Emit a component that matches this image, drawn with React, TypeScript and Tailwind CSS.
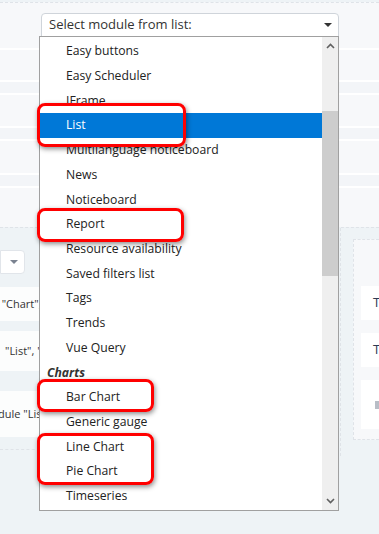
import React from "react";

const items: { label: string; group?: boolean; selected?: boolean }[] = [
  { label: "Easy buttons" },
  { label: "Easy Scheduler" },
  { label: "IFrame" },
  { label: "List", selected: true },
  { label: "Multilanguage noticeboard" },
  { label: "News" },
  { label: "Noticeboard" },
  { label: "Report" },
  { label: "Resource availability" },
  { label: "Saved filters list" },
  { label: "Tags" },
  { label: "Trends" },
  { label: "Vue Query" },
  { label: "Charts", group: true },
  { label: "Bar Chart" },
  { label: "Generic gauge" },
  { label: "Line Chart" },
  { label: "Pie Chart" },
  { label: "Timeseries" },
];

function RedBox({ cls }: { cls: string }) {
  return (
    <div
      className={
        "absolute rounded-[8px] border-[3px] border-[#ff0000] shadow-[1px_2px_5px_rgba(0,0,0,0.45)] " +
        cls
      }
    />
  );
}

export default function App() {
  return (
    <div
      className="relative w-[379px] h-[534px] overflow-hidden bg-[#eef3f6] text-[#222]"
      style={{ fontFamily: '"Open Sans", "Noto Sans", sans-serif' }}
    >
      {/* background: top panel with rows */}
      <div className="flex flex-col">
        <div className="h-[2px] bg-[#eef3f6]" />
        <div className="h-[225px] bg-[#f7f8fa] border-t border-dashed border-[#dfe3e8] flex flex-col">
          <div className="h-[45px]" />
          <div className="h-[2px] bg-white" />
          <div className="h-[30px]" />
          <div className="h-[2px] bg-white" />
          <div className="h-[11px] bg-[#f3f5f8]" />
          <div className="h-[2px] bg-white" />
          <div className="h-[31px]" />
          <div className="h-[2px] bg-white" />
          <div className="h-[11px] bg-[#f3f5f8]" />
          <div className="h-[2px] bg-white" />
          <div className="h-[32px]" />
          <div className="h-[2px] bg-white" />
          <div className="h-[11px] bg-[#f3f5f8]" />
          <div className="h-[2px] bg-white" />
          <div className="flex-1" />
        </div>
        {/* lower section */}
        <div className="flex border-t border-dashed border-[#dfe3e8]">
          {/* left */}
          <div className="w-[40px] flex flex-col pt-[22px] text-[11px] text-[#333] overflow-hidden">
            <div className="h-[24px] w-[25px] bg-white border border-[#e1e5ea] rounded-r-[4px] flex items-center justify-end pr-[6px]">
              <div className="w-0 h-0 border-l-[4px] border-r-[4px] border-t-[4px] border-l-transparent border-r-transparent border-t-[#7a8290]" />
            </div>
            <div className="mt-[13px] h-[34px] bg-white/80 flex items-center whitespace-nowrap -ml-[4px]">
              , "Chart",
            </div>
            <div className="mt-[10px] h-[40px] bg-white/80 flex items-center whitespace-nowrap pl-[5px]">
              "List", "C
            </div>
            <div className="mt-[20px] h-[46px] bg-white/80 flex items-center whitespace-nowrap -ml-[2px]">
              dule "List
            </div>
            <div className="mt-[12px] border-t border-dashed border-[#dfe3e8]" />
          </div>
          <div className="flex-1" />
          {/* right */}
          <div className="w-[39px] h-[228px] border-l border-dashed border-[#dfe3e8] pl-[12px] pt-[11px]">
            <div className="h-[201px] border-l border-t border-b border-dashed border-[#dfe3e8] bg-[#f7f8fa] pl-[7px] pt-[46px] flex flex-col gap-[13px]">
              <div className="h-[34px] bg-white flex items-center pl-[12px] text-[13px] text-[#2d3a55]">T</div>
              <div className="h-[34px] bg-white flex items-center pl-[12px] text-[13px] text-[#2d3a55]">T</div>
              <div className="h-[49px] bg-white flex items-center pl-[14px]">
                <div className="w-[8px] h-[8px] bg-[#b8bdc6]" />
              </div>
            </div>
          </div>
        </div>
      </div>

      {/* select box */}
      <div className="absolute left-[41px] top-[13px] w-[298px] h-[24px] bg-white border border-[#cfd4da] rounded-t-[4px] flex items-center pl-[7px] text-[13px] text-[#333]">
        <span>Select module from list:</span>
        <div className="ml-auto mr-[6px] w-0 h-0 border-l-[4px] border-r-[4px] border-t-[4px] border-l-transparent border-r-transparent border-t-[#333]" />
      </div>

      {/* dropdown list */}
      <div className="absolute left-[39px] top-[36px] w-[300px] h-[475px] bg-white border border-[#a0a0a0] flex overflow-hidden">
        <div className="w-[282px] flex flex-col pt-[2px]">
          {items.map((it) => (
            <div
              key={it.label}
              className={
                "h-[24.72px] shrink-0 flex items-center text-[12.2px] whitespace-nowrap " +
                (it.group
                  ? "pl-[7px] font-bold italic text-[#333]"
                  : it.selected
                  ? "pl-[26px] bg-[#0078d7] text-white"
                  : "pl-[26px] text-[#222]")
              }
            >
              {it.label}
            </div>
          ))}
        </div>
        <div className="w-[16px] bg-[#efefef] flex flex-col">
          <div className="h-[18px] flex items-center justify-center">
            <svg width="9" height="6" viewBox="0 0 9 6">
              <path d="M1 5 L4.5 1.5 L8 5" fill="none" stroke="#606060" strokeWidth="1.6" />
            </svg>
          </div>
          <div className="h-[56px]" />
          <div className="h-[165px] bg-[#cdcdcd]" />
          <div className="flex-1" />
          <div className="h-[18px] flex items-center justify-center">
            <svg width="9" height="6" viewBox="0 0 9 6">
              <path d="M1 1 L4.5 4.5 L8 1" fill="none" stroke="#606060" strokeWidth="1.6" />
            </svg>
          </div>
        </div>
      </div>

      {/* red highlight boxes */}
      <RedBox cls="left-[37px] top-[103px] w-[149px] h-[44px]" />
      <RedBox cls="left-[37px] top-[208px] w-[147px] h-[34px]" />
      <RedBox cls="left-[37px] top-[379px] w-[117px] h-[33px]" />
      <RedBox cls="left-[37px] top-[433px] w-[117px] h-[52px]" />
    </div>
  );
}
